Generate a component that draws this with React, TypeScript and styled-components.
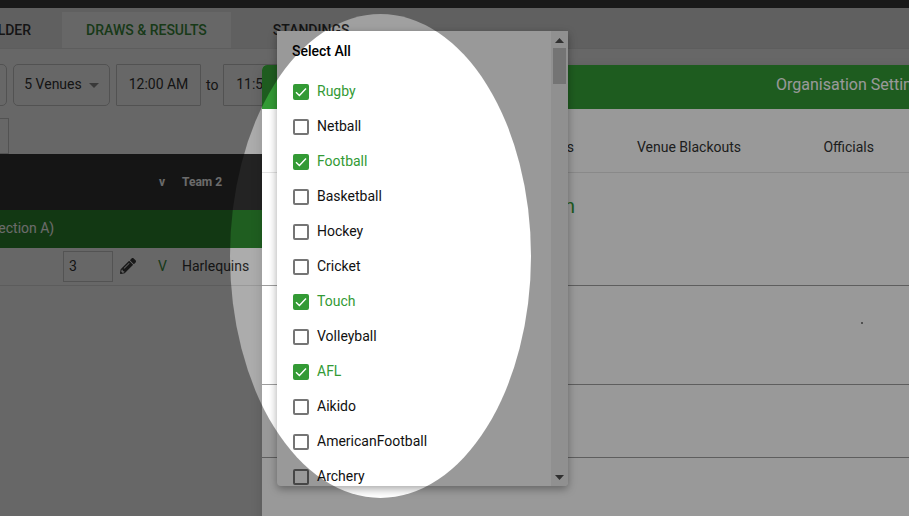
import styled, { createGlobalStyle } from 'styled-components';
import { FaPencilAlt } from 'react-icons/fa';

const sports = [
  { name: 'Rugby', checked: true },
  { name: 'Netball', checked: false },
  { name: 'Football', checked: true },
  { name: 'Basketball', checked: false },
  { name: 'Hockey', checked: false },
  { name: 'Cricket', checked: false },
  { name: 'Touch', checked: true },
  { name: 'Volleyball', checked: false },
  { name: 'AFL', checked: true },
  { name: 'Aikido', checked: false },
  { name: 'AmericanFootball', checked: false },
  { name: 'Archery', checked: false }
];

const App = () => {
  return (
    <Screen>
      <GlobalStyle />
      <TopBar />
      <Tabs>
        <Tab>SCHEDULE BUILDER</Tab>
        <Tab $active>DRAWS &amp; RESULTS</Tab>
        <Tab>STANDINGS</Tab>
      </Tabs>
      <Filters>
        <FilterBox $width={60} $round>
          All
        </FilterBox>
        <FilterBox $width={97} $round>
          5 Venues <Caret />
        </FilterBox>
        <FilterBox $width={85}>12:00 AM</FilterBox>
        <ToLabel>to</ToLabel>
        <FilterBox $width={85}>11:59 PM</FilterBox>
      </Filters>
      <SecondRow>
        <SmallBox />
      </SecondRow>
      <TableHead>
        <HeadV>v</HeadV>
        <HeadTeam>Team 2</HeadTeam>
      </TableHead>
      <SectionRow>
        <SectionTitle>Section A)</SectionTitle>
      </SectionRow>
      <MatchRow>
        <ScoreInput>3</ScoreInput>
        <EditIcon>
          <FaPencilAlt size={16} />
        </EditIcon>
        <MatchV>V</MatchV>
        <TeamName>Harlequins</TeamName>
      </MatchRow>

      <Mask />
      <Modal>
        <ModalHeader>Organisation Settings</ModalHeader>
        <ModalTabs>
          <ModalTab $width={312}>Venues</ModalTab>
          <ModalTab $width={167}>Venue Blackouts</ModalTab>
          <ModalTab $width={133}>Officials</ModalTab>
        </ModalTabs>
        <ModalHeading>Competition</ModalHeading>
        <ModalRule $height={99} />
        <ModalRule $height={73} />
      </Modal>
      <Speck />

      <Dropdown>
        <List>
          <SelectAll>Select All</SelectAll>
          {sports.map((sport) => (
            <Item key={sport.name} $checked={sport.checked}>
              <CheckBox $checked={sport.checked}>
                {sport.checked && (
                  <svg width="12" height="10" viewBox="0 0 12 10" fill="none">
                    <path d="M1 5.2 L4.4 8.4 L11 1.4" stroke="#fff" strokeWidth="1.4" />
                  </svg>
                )}
              </CheckBox>
              {sport.name}
            </Item>
          ))}
        </List>
        <ScrollBar>
          <svg width="9" height="5" viewBox="0 0 9 5">
            <path d="M4.5 0 L9 5 L0 5 Z" fill="#505050" />
          </svg>
          <Thumb />
          <ScrollSpace />
          <svg width="9" height="5" viewBox="0 0 9 5">
            <path d="M0 0 L9 0 L4.5 5 Z" fill="#505050" />
          </svg>
        </ScrollBar>
      </Dropdown>
      <Spotlight />
    </Screen>
  );
};

export default App;

const GlobalStyle = createGlobalStyle`
  html, body {
    margin: 0;
    padding: 0;
    overflow: hidden;
    background: #f4f4f4;
  }
  * {
    box-sizing: border-box;
  }
`;

const Screen = styled.div`
  position: relative;
  width: 909px;
  height: 516px;
  overflow: hidden;
  background: #f7f7f7;
  font-family: Roboto, 'Liberation Sans', sans-serif;
  font-size: 14px;
  color: #333;
`;

const TopBar = styled.div`
  height: 8px;
  background: #3d3d3d;
`;

const Tabs = styled.div`
  display: flex;
  align-items: flex-end;
  height: 41px;
  margin-left: -97px;
  background: #e6e6e6;
  border-bottom: 1px solid #e0e0e0;
`;

const Tab = styled.div<{ $active?: boolean }>`
  height: 36px;
  display: flex;
  align-items: center;
  justify-content: center;
  padding: 0 ${(p) => (p.$active ? '24px' : '31px')} 0 ${(p) => (p.$active ? '24px' : '0')};
  font-weight: 500;
  background: ${(p) => (p.$active ? '#f7f7f7' : 'transparent')};
  color: ${(p) => (p.$active ? '#3a8a3c' : '#333')};
  &:last-child {
    padding-left: 42px;
  }
`;

const Filters = styled.div`
  display: flex;
  align-items: center;
  gap: 6px;
  height: 42px;
  margin: 15px 0 0 -53px;
`;

const FilterBox = styled.div<{ $width: number; $round?: boolean }>`
  width: ${(p) => p.$width}px;
  height: 42px;
  flex: none;
  display: flex;
  align-items: center;
  justify-content: center;
  gap: 7px;
  padding-bottom: 2px;
  border: 1px solid #c4c4c4;
  border-radius: ${(p) => (p.$round ? '5px' : '1px')};
  font-size: 14px;
  color: #333;
`;

const Caret = styled.span`
  width: 0;
  height: 0;
  margin-top: 2px;
  border-left: 5px solid transparent;
  border-right: 5px solid transparent;
  border-top: 5px solid #8a8a8a;
`;

const ToLabel = styled.span`
  font-size: 14px;
  margin: 0 -1px 0 -1px;
`;

const SecondRow = styled.div`
  height: 36px;
  margin-top: 12px;
`;

const SmallBox = styled.div`
  width: 9px;
  height: 36px;
  border: 1px solid #c4c4c4;
  border-left: 0;
`;

const TableHead = styled.div`
  height: 56px;
  display: flex;
  align-items: center;
  padding-left: 159px;
  background: #333;
  font-size: 12px;
  font-weight: 700;
  color: #fff;
`;

const HeadV = styled.span`
  width: 23px;
`;

const HeadTeam = styled.span`
  font-weight: 700;
`;

const SectionRow = styled.div`
  height: 38px;
  display: flex;
  align-items: center;
  justify-content: flex-start;
  margin-left: -10px;
  padding-bottom: 2px;
  background: #2d872e;
  color: #fff;
`;

const SectionTitle = styled.span`
  font-size: 14px;
`;

const MatchRow = styled.div`
  height: 38px;
  display: flex;
  align-items: center;
  padding: 0 0 1px 63px;
  border-bottom: 1px solid #dcdcdc;
`;

const ScoreInput = styled.div`
  width: 50px;
  height: 31px;
  display: flex;
  align-items: center;
  padding-left: 5px;
  border: 1px solid #c8c8c8;
  color: #333;
`;

const EditIcon = styled.span`
  display: flex;
  width: 45px;
  padding-left: 7px;
  color: #3a3a3a;
`;

const MatchV = styled.span`
  width: 24px;
  color: #3a8a3c;
`;

const TeamName = styled.span`
  color: #333;
`;

const Mask = styled.div`
  position: absolute;
  inset: 0;
  background: rgba(0, 0, 0, 0.3);
`;

const Modal = styled.div`
  position: absolute;
  left: 262px;
  top: 65px;
  width: 800px;
  height: 460px;
  background: #fff;
  border-radius: 5px 5px 0 0;
  box-shadow: 0 4px 12px rgba(0, 0, 0, 0.15);
`;

const ModalHeader = styled.div`
  height: 44px;
  display: flex;
  align-items: center;
  padding: 0 0 5px 514px;
  border-radius: 5px 5px 0 0;
  background: #339a35;
  color: #fff;
  font-size: 16px;
`;

const ModalTabs = styled.div`
  height: 64px;
  display: flex;
  align-items: center;
  padding-top: 12px;
  border-bottom: 1px solid #e4e4e4;
  color: #333;
`;

const ModalTab = styled.div<{ $width: number }>`
  width: ${(p) => p.$width}px;
  flex: none;
  text-align: right;
`;

const ModalHeading = styled.div`
  height: 113px;
  padding: 21px 0 0 204px;
  font-size: 20px;
  color: #339a35;
  border-bottom: 1px solid #9d9d9d;
`;

const ModalRule = styled.div<{ $height: number }>`
  height: ${(p) => p.$height}px;
  border-bottom: 1px solid #9d9d9d;
`;

const Speck = styled.div`
  position: absolute;
  left: 861px;
  top: 322px;
  width: 2px;
  height: 2px;
  background: #888;
`;

const Dropdown = styled.div`
  position: absolute;
  left: 277px;
  top: 31px;
  width: 291px;
  height: 455px;
  display: flex;
  background: #fff;
  border-radius: 0 0 4px 4px;
  box-shadow: 0 3px 8px rgba(0, 0, 0, 0.35);
  overflow: hidden;
`;

const List = styled.div`
  flex: 1;
  min-width: 0;
  overflow: hidden;
  padding-left: 15px;
`;

const SelectAll = styled.div`
  height: 42px;
  padding-top: 12px;
  font-weight: 500;
  color: #000;
  line-height: 16px;
`;

const Item = styled.div<{ $checked: boolean }>`
  height: 35px;
  display: flex;
  align-items: center;
  gap: 8px;
  padding-left: 1px;
  color: ${(p) => (p.$checked ? '#339a35' : '#111')};
`;

const CheckBox = styled.span<{ $checked: boolean }>`
  width: 16px;
  height: 16px;
  margin-top: 2px;
  flex: none;
  display: flex;
  align-items: center;
  justify-content: center;
  border-radius: 2px;
  border: 2px solid ${(p) => (p.$checked ? '#339a35' : '#757575')};
  background: ${(p) => (p.$checked ? '#339a35' : '#fff')};
`;

const ScrollBar = styled.div`
  width: 17px;
  flex: none;
  display: flex;
  flex-direction: column;
  align-items: center;
  padding: 7px 0 6px;
  background: #f1f1f1;
`;

const Thumb = styled.div`
  width: 13px;
  height: 36px;
  margin-top: 5px;
  background: #c1c1c1;
`;

const ScrollSpace = styled.div`
  flex: 1;
`;

const Spotlight = styled.div`
  position: absolute;
  left: 230px;
  top: 14px;
  width: 301px;
  height: 484px;
  border-radius: 50%;
  box-shadow: 0 0 0 1000px rgba(0, 0, 0, 0.4);
  pointer-events: none;
`;
